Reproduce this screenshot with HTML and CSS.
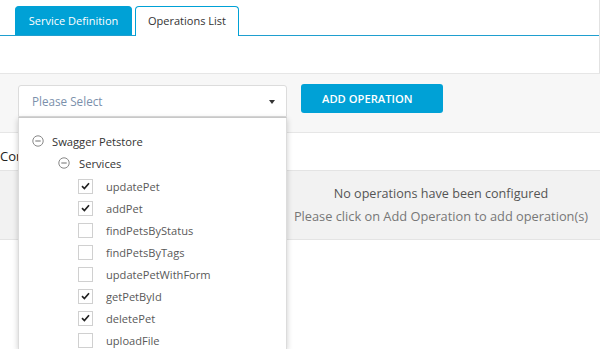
FILE: index.html
```html
<!DOCTYPE html>
<html lang="en">
<head>
  <meta charset="UTF-8">
  <meta name="viewport" content="width=device-width, initial-scale=1.0">
  <title>Operations List</title>
  <link rel="stylesheet" href="styles.css">
</head>
<body>
  <div class="tab-panel">
    <ul class="tabs">
      <li class="tab">Service Definition</li>
      <li class="tab active">Operations List</li>
    </ul>
  </div>

  <div class="toolbar">
    <div class="select-wrap">
      <div class="select">
        <span class="placeholder">Please Select</span>
        <span class="caret"></span>
      </div>

      <!-- Dropdown tree -->
      <div class="dropdown">
        <div class="node">
          <svg class="toggle" width="12" height="12" viewBox="0 0 12 12"><circle cx="6" cy="6" r="5.2" fill="none" stroke="#888" stroke-width="1"/><line x1="3.3" y1="6" x2="8.7" y2="6" stroke="#888" stroke-width="1.2"/></svg>
          <span class="node-title">Swagger Petstore</span>
        </div>
        <div class="node child">
          <svg class="toggle" width="12" height="12" viewBox="0 0 12 12"><circle cx="6" cy="6" r="5.2" fill="none" stroke="#888" stroke-width="1"/><line x1="3.3" y1="6" x2="8.7" y2="6" stroke="#888" stroke-width="1.2"/></svg>
          <span class="node-title">Services</span>
        </div>
        <ul class="ops" id="ops"></ul>
      </div>
    </div>
    <button class="add-btn">ADD OPERATION</button>
  </div>

  <div class="operations">
    <h3>Configured Operations</h3>
    <div class="empty">
      <p class="empty-title">No operations have been configured</p>
      <p class="empty-hint">Please click on Add Operation to add operation(s)</p>
    </div>
  </div>

  <script>
    const ops = [
      { name: 'updatePet', checked: true },
      { name: 'addPet', checked: true },
      { name: 'findPetsByStatus', checked: false },
      { name: 'findPetsByTags', checked: false },
      { name: 'updatePetWithForm', checked: false },
      { name: 'getPetById', checked: true },
      { name: 'deletePet', checked: true },
      { name: 'uploadFile', checked: false }
    ];
    const list = document.getElementById('ops');
    ops.forEach(op => {
      const li = document.createElement('li');
      li.innerHTML = `
        <span class="check">${op.checked ? '<svg width="9" height="8" viewBox="0 0 9 8"><path d="M1 4.2 L3.4 6.5 L8 1.3" fill="none" stroke="#222" stroke-width="1.7"/></svg>' : ''}</span>
        <span class="op-name">${op.name}</span>
      `;
      list.appendChild(li);
    });
  </script>
</body>
</html>
```

FILE: styles.css
```css
html, body {
  height: 100%;
}
body {
  font-family: "Open Sans", Arial, sans-serif;
  margin: 0;
  padding: 0;
  min-height: 349px;
  background: #fff;
  color: #333;
}
.tab-panel {
  width: 599px;
  height: 73px;
  border-right: 1px solid #e2e2e2;
}
.tabs {
  list-style: none;
  margin: 0;
  padding: 6px 0 0 15px;
  display: flex;
  gap: 3px;
  border-bottom: 1px solid #1f9fcf;
}
.tab {
  box-sizing: border-box;
  width: 117px;
  height: 29px;
  line-height: 28px;
  font-size: 11px;
  white-space: nowrap;
  border: 1px solid #00a1d6;
  border-bottom: none;
  border-radius: 4px 4px 0 0;
  background: #00a1d6;
  color: #fff;
  text-align: center;
}
.tab.active {
  width: 104px;
  background: #fff;
  color: #333;
  height: 30px;
  margin-bottom: -1px;
}
.toolbar {
  height: 58px;
  background: #f7f7f7;
  border-top: 1px solid #e6e6e6;
  border-bottom: 1px solid #e6e6e6;
  display: flex;
  align-items: flex-start;
  gap: 14px;
  padding: 0 0 0 18px;
}
.select-wrap {
  position: relative;
  margin-top: 11px;
  z-index: 5;
}
.select {
  box-sizing: border-box;
  width: 269px;
  height: 32px;
  background: #fff;
  border: 1px solid #dcdcdc;
  border-radius: 3px 3px 0 0;
  display: flex;
  align-items: center;
  justify-content: space-between;
  padding: 0 11px 0 13px;
}
.placeholder {
  font-size: 11.7px;
  color: #7b90ab;
}
.caret {
  width: 0;
  height: 0;
  border-left: 3.5px solid transparent;
  border-right: 3.5px solid transparent;
  border-top: 4px solid #333;
  margin-top: 2px;
}
.dropdown {
  position: absolute;
  top: 32px;
  left: 0;
  box-sizing: border-box;
  width: 269px;
  height: 232px;
  overflow: hidden;
  background: #fff;
  border: 1px solid #dcdcdc;
  border-top: 1px solid #c8c8c8;
  border-bottom: none;
  box-shadow: 0 2px 6px rgba(0, 0, 0, 0.2);
  padding: 12px 0 0 13px;
}
.node {
  display: flex;
  align-items: center;
  height: 22px;
  gap: 8px;
}
.node.child {
  padding-left: 26px;
  gap: 9px;
}
.node-title {
  font-size: 11.2px;
  color: #333;
}
.toggle {
  flex: none;
}
.ops {
  list-style: none;
  margin: 1px 0 0 46px;
  padding: 0;
}
.ops li {
  display: flex;
  align-items: center;
  height: 22px;
  gap: 13px;
}
.check {
  width: 13px;
  height: 13px;
  border: 1px solid #d0d0d0;
  background: #fff;
  display: flex;
  align-items: center;
  justify-content: center;
}
.op-name {
  font-size: 11.1px;
  color: #595959;
}
.add-btn {
  margin-top: 10px;
  width: 142px;
  height: 29px;
  background: #00a1d6;
  border: none;
  border-radius: 3px;
  color: #fff;
  font-family: "Open Sans", Arial, sans-serif;
  font-size: 11.2px;
  font-weight: 600;
  text-align: left;
  padding: 0 0 0 21px;
}
.operations h3 {
  margin: 13px 0 0 0;
  font-size: 13px;
  font-weight: 400;
  color: #222;
  line-height: 20px;
}
.empty {
  margin-top: 4px;
  height: 70px;
  background: #f2f2f2;
  border-top: 1px solid #e4e4e4;
  border-bottom: 1px solid #e4e4e4;
  padding-left: 282px;
  text-align: center;
  box-sizing: border-box;
}
.empty p {
  margin: 0;
}
.empty-title {
  padding-top: 11px;
  font-size: 12.6px;
  color: #555;
  line-height: 23px;
}
.empty-hint {
  font-size: 12.8px;
  color: #777;
  line-height: 23px;
}
```
